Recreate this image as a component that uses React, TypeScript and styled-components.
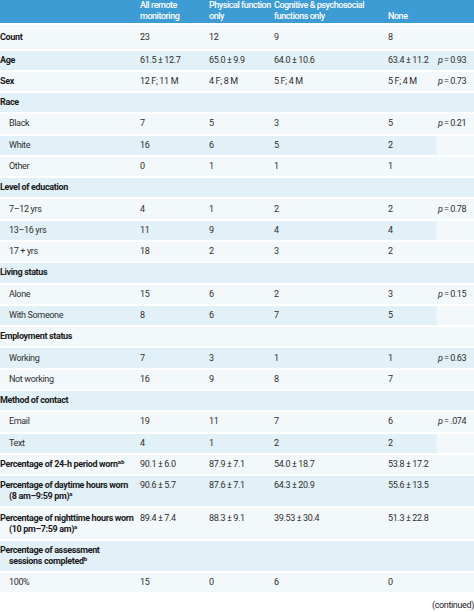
import React from 'react';
import styled, { createGlobalStyle } from 'styled-components';

type PMode = 'none' | 'value' | 'span';

interface Row {
  label: React.ReactNode;
  kind: 'group' | 'item';
  values: string[];
  p?: string;
  pMode: PMode;
}

const headerBlue = '#3d9cd4';
const stripeBlue = '#e2f0f7';
const stripeLight = '#f3f8fb';

const GlobalStyle = createGlobalStyle`
  html, body {
    margin: 0;
    padding: 0;
    background: #ffffff;
  }

  body {
    font-family: 'Roboto', 'Liberation Sans', sans-serif;
    font-size: 9px;
    letter-spacing: -0.35px;
    color: #2e2e2e;
  }
`;

const Page = styled.div`
  width: 474px;
  height: 612px;
  overflow: hidden;
`;

const Table = styled.table`
  width: 474px;
  table-layout: fixed;
  border-collapse: collapse;
`;

const HeadCell = styled.th`
  background: ${headerBlue};
  color: #ffffff;
  font-weight: 500;
  text-align: left;
  vertical-align: bottom;
  line-height: 10.5px;
  letter-spacing: -0.45px;
  padding: 0 0 2px 0;
  white-space: nowrap;
`;

const BodyRow = styled.tr<{ $tone: 'light' | 'blue'; $first: boolean }>`
  background: ${({ $tone }) => ($tone === 'blue' ? stripeBlue : stripeLight)};

  & > td {
    border-top: 2px solid #ffffff;
    padding-top: ${({ $first }) => ($first ? '7px' : '4.15px')};
    padding-bottom: ${({ $first }) => ($first ? '5.5px' : '4.15px')};
  }
`;

const LabelCell = styled.td<{ $kind: 'group' | 'item' }>`
  vertical-align: top;
  line-height: 11px;
  white-space: nowrap;
  font-weight: ${({ $kind }) => ($kind === 'group' ? 'bold' : 'normal')};
  color: ${({ $kind }) => ($kind === 'group' ? '#1a1a1a' : '#2e2e2e')};
  padding-left: 9px;
  text-indent: ${({ $kind }) => ($kind === 'group' ? '-9px' : '0')};
`;

const ValueCell = styled.td`
  vertical-align: top;
  line-height: 11px;
  white-space: nowrap;
  padding-left: 0;
`;

const PCell = styled.td<{ $spanned: boolean }>`
  vertical-align: top;
  line-height: 11px;
  white-space: nowrap;
  padding-left: 1px;
  background: ${({ $spanned }) => ($spanned ? stripeLight : 'transparent')};
`;

const Italic = styled.i`
  font-style: italic;
`;

const Sup = styled.sup`
  font-size: 6px;
  line-height: 0;
  vertical-align: 3px;
  letter-spacing: 0;
`;

const Continued = styled.div`
  margin-top: 8px;
  text-align: right;
  line-height: 11px;
  color: #222222;
`;

const rows: Row[] = [
  { label: 'Count', kind: 'group', values: ['23', '12', '9', '8'], pMode: 'none' },
  { label: 'Age', kind: 'group', values: ['61.5 ± 12.7', '65.0 ± 9.9', '64.0 ± 10.6', '63.4 ± 11.2'], p: '0.93', pMode: 'value' },
  { label: 'Sex', kind: 'group', values: ['12 F; 11 M', '4 F; 8 M', '5 F; 4 M', '5 F; 4 M'], p: '0.73', pMode: 'value' },
  { label: 'Race', kind: 'group', values: ['', '', '', ''], pMode: 'none' },
  { label: 'Black', kind: 'item', values: ['7', '5', '3', '5'], p: '0.21', pMode: 'value' },
  { label: 'White', kind: 'item', values: ['16', '6', '5', '2'], pMode: 'span' },
  { label: 'Other', kind: 'item', values: ['0', '1', '1', '1'], pMode: 'span' },
  { label: 'Level of education', kind: 'group', values: ['', '', '', ''], pMode: 'none' },
  { label: '7–12 yrs', kind: 'item', values: ['4', '1', '2', '2'], p: '0.78', pMode: 'value' },
  { label: '13–16 yrs', kind: 'item', values: ['11', '9', '4', '4'], pMode: 'span' },
  { label: '17 + yrs', kind: 'item', values: ['18', '2', '3', '2'], pMode: 'span' },
  { label: 'Living status', kind: 'group', values: ['', '', '', ''], pMode: 'none' },
  { label: 'Alone', kind: 'item', values: ['15', '6', '2', '3'], p: '0.15', pMode: 'value' },
  { label: 'With Someone', kind: 'item', values: ['8', '6', '7', '5'], pMode: 'span' },
  { label: 'Employment status', kind: 'group', values: ['', '', '', ''], pMode: 'none' },
  { label: 'Working', kind: 'item', values: ['7', '3', '1', '1'], p: '0.63', pMode: 'value' },
  { label: 'Not working', kind: 'item', values: ['16', '9', '8', '7'], pMode: 'span' },
  { label: 'Method of contact', kind: 'group', values: ['', '', '', ''], pMode: 'none' },
  { label: 'Email', kind: 'item', values: ['19', '11', '7', '6'], p: '.074', pMode: 'value' },
  { label: 'Text', kind: 'item', values: ['4', '1', '2', '2'], pMode: 'span' },
  {
    label: (
      <>
        Percentage of 24-h period worn<Sup>ab</Sup>
      </>
    ),
    kind: 'group',
    values: ['90.1 ± 6.0', '87.9 ± 7.1', '54.0 ± 18.7', '53.8 ± 17.2'],
    pMode: 'none',
  },
  {
    label: (
      <>
        Percentage of daytime hours worn
        <br />
        (8 am–9:59 pm)<Sup>a</Sup>
      </>
    ),
    kind: 'group',
    values: ['90.6 ± 5.7', '87.6 ± 7.1', '64.3 ± 20.9', '55.6 ± 13.5'],
    pMode: 'none',
  },
  {
    label: (
      <>
        Percentage of nighttime hours worn
        <br />
        (10 pm–7:59 am)<Sup>a</Sup>
      </>
    ),
    kind: 'group',
    values: ['89.4 ± 7.4', '88.3 ± 9.1', '39.53 ± 30.4', '51.3 ± 22.8'],
    pMode: 'none',
  },
  {
    label: (
      <>
        Percentage of assessment
        <br />
        sessions completed<Sup>b</Sup>
      </>
    ),
    kind: 'group',
    values: ['', '', '', ''],
    pMode: 'none',
  },
  { label: '100%', kind: 'item', values: ['15', '0', '6', '0'], pMode: 'none' },
];

const App: React.FC = () => {
  return (
    <>
      <GlobalStyle />
      <Page>
        <Table>
          <colgroup>
            <col style={{ width: 140 }} />
            <col style={{ width: 69 }} />
            <col style={{ width: 65 }} />
            <col style={{ width: 114 }} />
            <col style={{ width: 49 }} />
            <col style={{ width: 37 }} />
          </colgroup>
          <thead>
            <tr>
              <HeadCell />
              <HeadCell>
                All remote
                <br />
                monitoring
              </HeadCell>
              <HeadCell>
                Physical function
                <br />
                only
              </HeadCell>
              <HeadCell>
                Cognitive &amp; psychosocial
                <br />
                functions only
              </HeadCell>
              <HeadCell>None</HeadCell>
              <HeadCell />
            </tr>
          </thead>
          <tbody>
            {rows.map((row, i) => (
              <BodyRow key={i} $tone={i % 2 === 0 ? 'light' : 'blue'} $first={i === 0}>
                <LabelCell $kind={row.kind}>{row.label}</LabelCell>
                {row.values.map((v, j) => (
                  <ValueCell key={j}>{v}</ValueCell>
                ))}
                <PCell $spanned={row.pMode === 'span'}>
                  {row.pMode === 'value' && (
                    <>
                      <Italic>p</Italic>{'\u2009=\u2009'}{row.p}
                    </>
                  )}
                </PCell>
              </BodyRow>
            ))}
          </tbody>
        </Table>
        <Continued>(continued)</Continued>
      </Page>
    </>
  );
};

export default App;
